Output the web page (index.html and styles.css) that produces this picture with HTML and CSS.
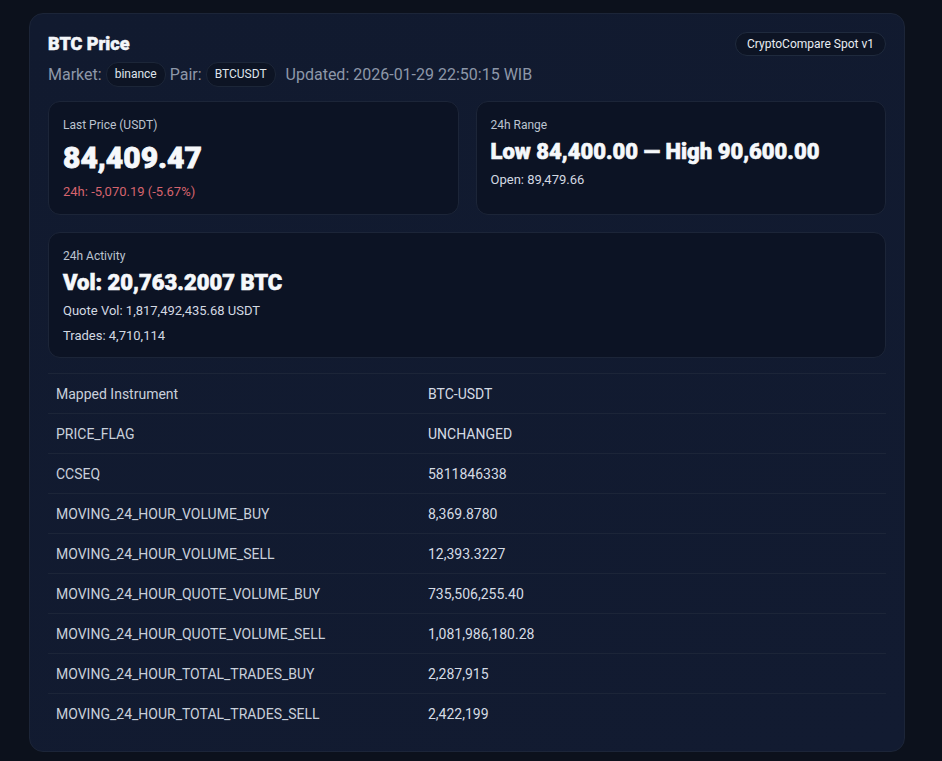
FILE: index.html
```html
<!DOCTYPE html>
<html lang="en">
<head>
    <meta charset="UTF-8">
    <meta name="viewport" content="width=device-width, initial-scale=1.0">
    <title>BTC Price</title>
    <link rel="stylesheet" href="styles.css">
</head>
<body>
    <div class="panel">
        <div class="panel-head">
            <h1 class="title">BTC Price</h1>
            <span class="source">CryptoCompare Spot v1</span>
        </div>
        <div class="meta">
            <span>Market:</span>
            <span class="pill">binance</span>
            <span>Pair:</span>
            <span class="pill">BTCUSDT</span>
            <span class="updated">Updated: 2026-01-29 22:50:15 WIB</span>
        </div>

        <div class="stats">
            <div class="stat">
                <div class="stat-label">Last Price (USDT)</div>
                <div class="stat-value big">84,409.47</div>
                <div class="stat-sub down">24h: -5,070.19 (-5.67%)</div>
            </div>
            <div class="stat">
                <div class="stat-label">24h Range</div>
                <div class="stat-value">Low 84,400.00 — High 90,600.00</div>
                <div class="stat-sub">Open: 89,479.66</div>
            </div>
            <div class="stat wide">
                <div class="stat-label">24h Activity</div>
                <div class="stat-value">Vol: 20,763.2007 BTC</div>
                <div class="stat-sub">Quote Vol: 1,817,492,435.68 USDT</div>
                <div class="stat-sub">Trades: 4,710,114</div>
            </div>
        </div>

        <table class="fields">
            <tr><td>Mapped Instrument</td><td>BTC-USDT</td></tr>
            <tr><td>PRICE_FLAG</td><td>UNCHANGED</td></tr>
            <tr><td>CCSEQ</td><td>5811846338</td></tr>
            <tr><td>MOVING_24_HOUR_VOLUME_BUY</td><td>8,369.8780</td></tr>
            <tr><td>MOVING_24_HOUR_VOLUME_SELL</td><td>12,393.3227</td></tr>
            <tr><td>MOVING_24_HOUR_QUOTE_VOLUME_BUY</td><td>735,506,255.40</td></tr>
            <tr><td>MOVING_24_HOUR_QUOTE_VOLUME_SELL</td><td>1,081,986,180.28</td></tr>
            <tr><td>MOVING_24_HOUR_TOTAL_TRADES_BUY</td><td>2,287,915</td></tr>
            <tr><td>MOVING_24_HOUR_TOTAL_TRADES_SELL</td><td>2,422,199</td></tr>
        </table>
    </div>
</body>
</html>
```

FILE: styles.css
```css
body, html {
    margin: 0;
    padding: 0;
}
body {
    background: #0c111c;
    color: #e5e9f0;
    font-family: Roboto, "Liberation Sans", sans-serif;
    padding: 13px 29px 10px;
}
.panel {
    width: 838px;
    padding: 18px;
    background: linear-gradient(160deg, #111a2f, #121b31);
    border: 1px solid #1c2538;
    border-radius: 14px;
}
.panel-head {
    display: flex;
    justify-content: space-between;
    align-items: center;
    height: 24px;
}
.title {
    margin: 0;
    font-size: 18px;
    font-weight: 900;
    line-height: 24px;
    color: #f4f6fa;
    -webkit-text-stroke: 0.5px currentColor;
}
.source {
    height: 22px;
    line-height: 22px;
    padding: 0 11px;
    font-size: 12px;
    color: #e8ecf2;
    background: #0d1424;
    border: 1px solid #1f2a3d;
    border-radius: 12px;
}
.meta {
    display: flex;
    align-items: center;
    gap: 4px;
    margin-top: 6px;
    height: 25px;
    font-size: 16px;
    color: #8d97a8;
}
.pill {
    height: 23px;
    line-height: 23px;
    padding: 0 8px;
    font-size: 12px;
    color: #dfe4ec;
    background: #0d1424;
    border: 1px solid #1c2638;
    border-radius: 12px;
}
.updated {
    margin-left: 6px;
}
.stats {
    display: grid;
    grid-template-columns: 1fr 1fr;
    gap: 17px;
    margin-top: 14px;
}
.stat {
    padding: 14px 14px 12px;
    background: #0c1324;
    border: 1px solid #1c2538;
    border-radius: 12px;
}
.stat.wide {
    grid-column: span 2;
    padding-bottom: 11px;
}
.stat-label {
    font-size: 12px;
    line-height: 18px;
    color: #bcc4d0;
}
.stat-value {
    margin-top: 4px;
    font-size: 22px;
    font-weight: 900;
    line-height: 28px;
    color: #f6f8fb;
    -webkit-text-stroke: 0.6px currentColor;
}
.stat-value.big {
    font-size: 30px;
    line-height: 40px;
    -webkit-text-stroke: 0.8px currentColor;
}
.stat-sub {
    margin-top: 4px;
    font-size: 13px;
    line-height: 20px;
    color: #d3d9e2;
}
.stat-sub + .stat-sub {
    margin-top: 5px;
}
.stat-sub.down {
    color: #d6646e;
}
.fields {
    width: 100%;
    margin-top: 15px;
    border-collapse: collapse;
    font-size: 14px;
}
.fields td {
    height: 39px;
    padding: 0 8px;
    border-top: 1px solid #1c2538;
    color: #d5dbe4;
}
.fields td:first-child {
    width: 356px;
    color: #c9d0db;
}
```
